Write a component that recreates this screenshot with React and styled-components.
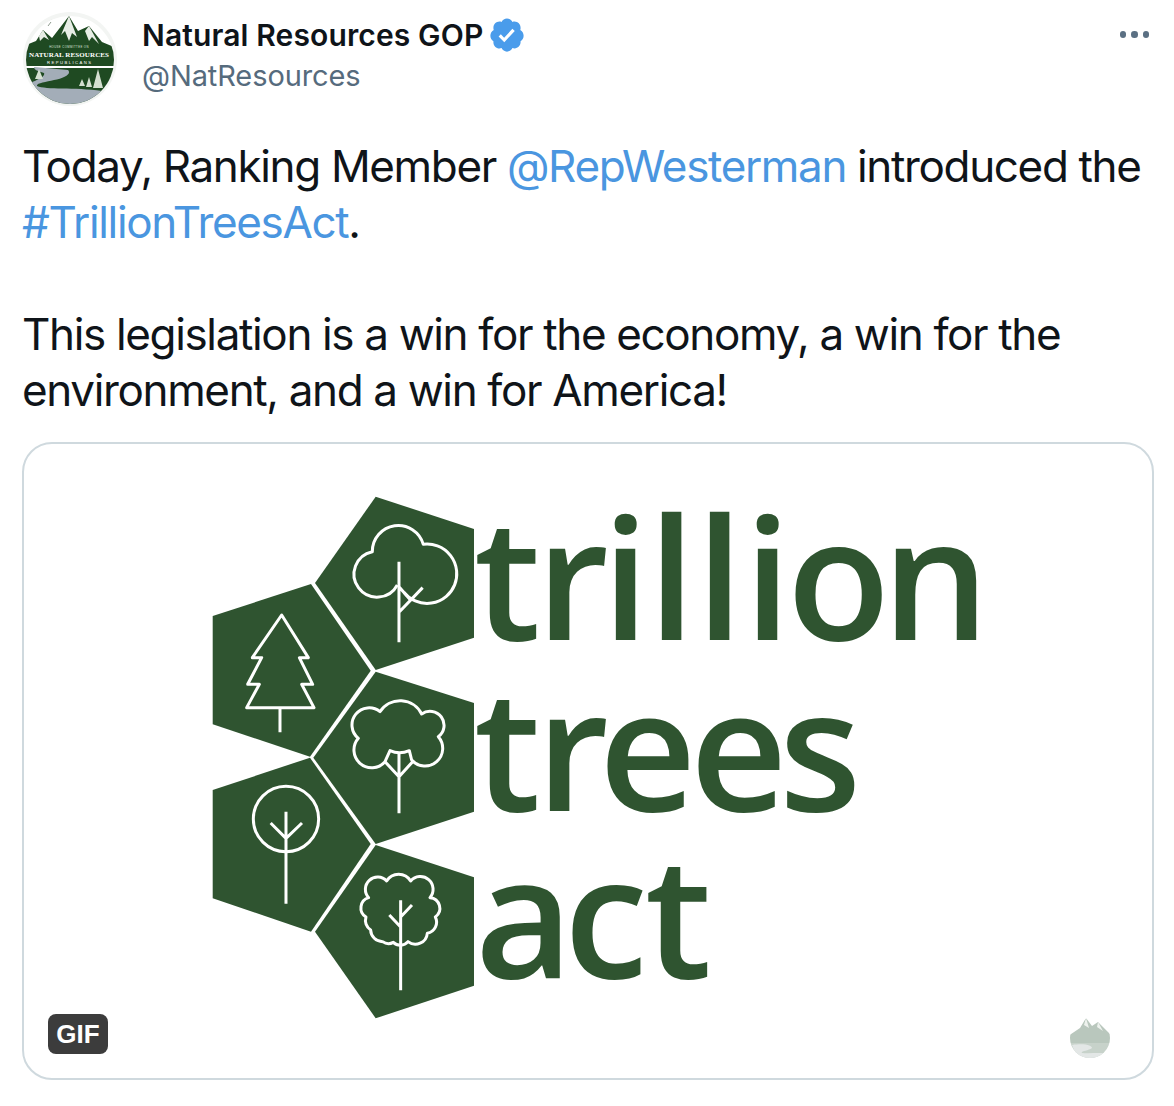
import React from 'react';
import styled, { createGlobalStyle } from 'styled-components';

const GlobalStyle = createGlobalStyle`
  html, body { margin: 0; padding: 0; background: #fff; }
  body { font-family: Inter, "Liberation Sans", Arial, sans-serif; color: #0f1419; }
`;

const Page = styled.div`
  width: 1174px;
  height: 1106px;
  box-sizing: border-box;
  padding: 11px 20px 0 22px;
`;

const Header = styled.header`
  display: flex;
  align-items: flex-start;
`;

const Avatar = styled.svg`
  width: 96px;
  height: 96px;
  flex: none;
  margin: 0 24px 0 0;
`;

const Names = styled.div`
  flex: 1;
  padding-top: 5px;
`;

const NameRow = styled.div`
  display: flex;
  align-items: center;
  height: 38px;
`;

const Name = styled.span`
  font-family: Inter, sans-serif;
  font-size: 30px;
  font-weight: 600;
  letter-spacing: 0.13px;
`;

const Badge = styled.svg`
  width: 38px;
  height: 38px;
  margin-left: 5px;
`;

const Handle = styled.div`
  font-family: Inter, sans-serif;
  font-size: 29px;
  line-height: 38px;
  margin-top: 3px;
  color: #566b7d;
  letter-spacing: -0.1px;
`;

const More = styled.div`
  display: flex;
  gap: 5px;
  margin-top: 20px;
  margin-right: 5px;
`;

const Dot = styled.i`
  width: 6.5px;
  height: 6.5px;
  border-radius: 50%;
  background: #5b7083;
`;

const Body = styled.p`
  margin: 31px 0 24px;
  font-family: Inter, sans-serif;
  font-size: 44px;
  line-height: 56px;
  letter-spacing: -1.35px;
  white-space: pre;
`;

const Link = styled.span`
  color: #4a96e0;
`;

const Card = styled.div`
  position: relative;
  width: 1132px;
  height: 638px;
  box-sizing: border-box;
  border: 2px solid #cfd9de;
  border-radius: 30px;
  overflow: hidden;
`;

const Art = styled.svg`
  display: block;
  width: 1128px;
  height: 634px;
`;

const GifTag = styled.span`
  position: absolute;
  left: 24px;
  bottom: 24px;
  width: 60px;
  height: 40px;
  border-radius: 8px;
  background: #3c3c3c;
  color: #fff;
  font-family: "Liberation Sans", Arial, sans-serif;
  font-size: 26px;
  font-weight: 700;
  line-height: 40px;
  text-align: center;
`;

const Watermark = styled.svg`
  position: absolute;
  right: 40px;
  bottom: 20px;
  width: 44px;
  height: 42px;
`;

const green = '#2f5430';

const Logo = () => (
  <>
    <defs>
      <clipPath id="av"><circle cx="48" cy="49" r="44" /></clipPath>
    </defs>
    <circle cx="48" cy="48" r="47" fill="#f3f5f3" />
    <g clipPath="url(#av)">
      <rect width="96" height="96" fill="#fff" />
      <path d="M4 34 L14 30 L21 19 L30 27 L47 5 L56 20 L67 15 L80 31 L92 36 L96 55 L0 55 Z" fill="#1f4a22" />
      <path d="M47 5 L55 26 L50 22 L47 30 L43 20 L39 24 Z M67 15 L77 33 L70 26 L67 30 L63 20 Z M21 19 L27 29 L22 26 L18 30 L17 25 Z" fill="#e8eee6" />
      <rect y="57" width="96" height="40" fill="#1f4a22" />
      <path d="M12 56 L46 59 C50 63 42 67 32 69 C24 71 14 72 15 75 C24 79 52 76 80 80 L72 96 L20 96 L3 74 C12 70 24 66 22 62 C16 60 12 59 12 56 Z" fill="#a3adb8" />
      <path d="M76 58 L81 77 L71 77 Z M67 66 L70 76 L64 76 Z M60 68 L63 75 L57 75 Z M17 58 L21 68 L13 68 Z" fill="#d4dfd0" />
      <path d="M24 10 L30 8 M26 15 L29 11" stroke="#8c9a8c" strokeWidth="1" fill="none" />
    </g>
    <text x="47" y="37" textAnchor="middle" fontFamily="Liberation Sans, sans-serif" fontSize="2.8" letterSpacing=".4" fill="#dfe7dc">HOUSE COMMITTEE ON</text>
    <text x="47" y="46" textAnchor="middle" fontFamily="Liberation Serif, serif" fontSize="7" fontWeight="700" textLength="80" fill="#fff">NATURAL RESOURCES</text>
    <text x="47" y="52.5" textAnchor="middle" fontFamily="Liberation Sans, sans-serif" fontSize="4.2" textLength="44" fill="#fff">REPUBLICANS</text>
  </>
);

const TreeArt = () => (
  <Art viewBox="24 444 1128 634">
    <g fill={green}>
      <polygon points="375.7,496.7 474,529 474,637.7 375.7,670 315,583" />
      <polygon points="212.7,616 311,584 370.7,670.7 310,756.7 212.7,724.3" />
      <polygon points="375.7,671.7 474,703 474,811.7 375.7,844 313.3,757.7" />
      <polygon points="212.7,790 310,757.7 370.7,844 311,931.7 212.7,898.3" />
      <polygon points="375.7,845 474,877.3 474,985.7 375.7,1018.3 315,931.7" />
    </g>
    <g transform="translate(200 485) scale(.3333)" fill="none" stroke="#fff" strokeWidth="9" strokeLinejoin="round">
      <path d="M592 300 A69 69 0 1 1 517 200 A78 78 0 0 1 670 178 A89 89 0 1 1 612 322" />
      <path d="M597 230 L597 472 M597 382 L668 308 M597 305 L634 348" />
      <path d="M245 390 L325 518 L298 518 L338 598 L305 598 L342 668 L140 668 L178 598 L143 598 L185 518 L157 518 Z M240 668 L240 742" />
    </g>
    <g transform="translate(340 690) scale(.3333)" fill="none" stroke="#fff" strokeWidth="9" strokeLinejoin="round">
      <path d="M135 215 A48 48 0 0 1 55 145 A44 44 0 0 1 120 65 A72 72 0 0 1 245 72 A38 38 0 0 1 295 140 A50 50 0 0 1 215 210 L208 182 Q178 195 150 182 Z" />
      <path d="M135 215 L177 260 L218 215 M177 192 L177 370" />
    </g>
    <g transform="translate(200 745) scale(.3333)" fill="none" stroke="#fff" strokeWidth="9" strokeLinejoin="round">
      <circle cx="258" cy="222" r="98" />
      <path d="M258 200 L258 476 M212 234 L258 280 L306 234" />
      <path d="M548 590 A36 36 0 0 1 512 555 A34 34 0 0 1 498 516 A32 32 0 0 1 506 458 A34 34 0 0 1 560 408 A42 42 0 0 1 632 408 A34 34 0 0 1 690 458 A32 32 0 0 1 706 516 A34 34 0 0 1 682 565 A36 36 0 0 1 624 590 A30 30 0 0 1 580 592 A30 30 0 0 1 548 590 Z" />
      <path d="M602 466 L602 736 M568 510 L602 546 M636 480 L602 516" />
    </g>
    <g fill={green} fontFamily="Open Sans, sans-serif" fontWeight="600" fontSize="169">
      <text x="474 536 602 648 696 744 787 882" y="640">trillion</text>
      <text x="474 536 599 690 779" y="811">trees</text>
      <text x="475 564 645" y="978">act</text>
    </g>
  </Art>
);

export default function App() {
  return (
    <Page>
      <GlobalStyle />
      <Header>
        <Avatar viewBox="0 0 96 96"><Logo /></Avatar>
        <Names>
          <NameRow>
            <Name>Natural Resources GOP</Name>
            <Badge viewBox="0 0 24 24">
              <path fill="#4a9ceb" d="M22.5 12.5c0-1.58-.875-2.95-2.148-3.6.154-.435.238-.905.238-1.4 0-2.21-1.71-3.998-3.818-3.998-.47 0-.92.084-1.336.25C14.818 2.415 13.51 1.5 12 1.5s-2.816.917-3.437 2.25c-.415-.165-.866-.25-1.336-.25-2.11 0-3.818 1.79-3.818 4 0 .494.083.964.237 1.4-1.272.65-2.147 2.018-2.147 3.6 0 1.495.782 2.798 1.942 3.486-.02.17-.032.34-.032.514 0 2.21 1.708 4 3.818 4 .47 0 .92-.086 1.335-.25.62 1.334 1.926 2.25 3.437 2.25 1.512 0 2.818-.916 3.437-2.25.415.163.865.248 1.336.248 2.11 0 3.818-1.79 3.818-4 0-.174-.012-.344-.033-.513 1.158-.687 1.943-1.99 1.943-3.484z" />
              <path fill="#fff" d="M10.3 16.6l-3.6-3.6 1.4-1.4 2.1 2.1 5.2-5.6 1.5 1.3z" />
            </Badge>
          </NameRow>
          <Handle>@NatResources</Handle>
        </Names>
        <More><Dot /><Dot /><Dot /></More>
      </Header>
      <Body>
        Today, Ranking Member <Link>@RepWesterman</Link> introduced the{'\n'}
        <Link>#TrillionTreesAct</Link>.{'\n\n'}
        This legislation is a win for the economy, a win for the{'\n'}
        environment, and a win for America!
      </Body>
      <Card>
        <TreeArt />
        <GifTag>GIF</GifTag>
        <Watermark viewBox="0 0 44 42">
          <defs><clipPath id="wm"><circle cx="22" cy="22" r="20" /></clipPath></defs>
          <g clipPath="url(#wm)">
            <path d="M0 20 L12 12 L18 2 L24 10 L30 6 L44 20 L44 27 L0 27 Z" fill="#b9c7bd" />
            <path d="M18 2 L21 12 L16 9 Z M30 6 L35 15 L29 11 Z" fill="#eef2ee" />
            <rect y="27" width="44" height="16" fill="#c7d2ca" />
            <path d="M4 29 C18 27 24 30 24 32 C20 35 12 35 14 37 C22 38 34 36 40 38 L34 44 L10 44 Z" fill="#e3e7e6" />
          </g>
        </Watermark>
      </Card>
    </Page>
  );
}
